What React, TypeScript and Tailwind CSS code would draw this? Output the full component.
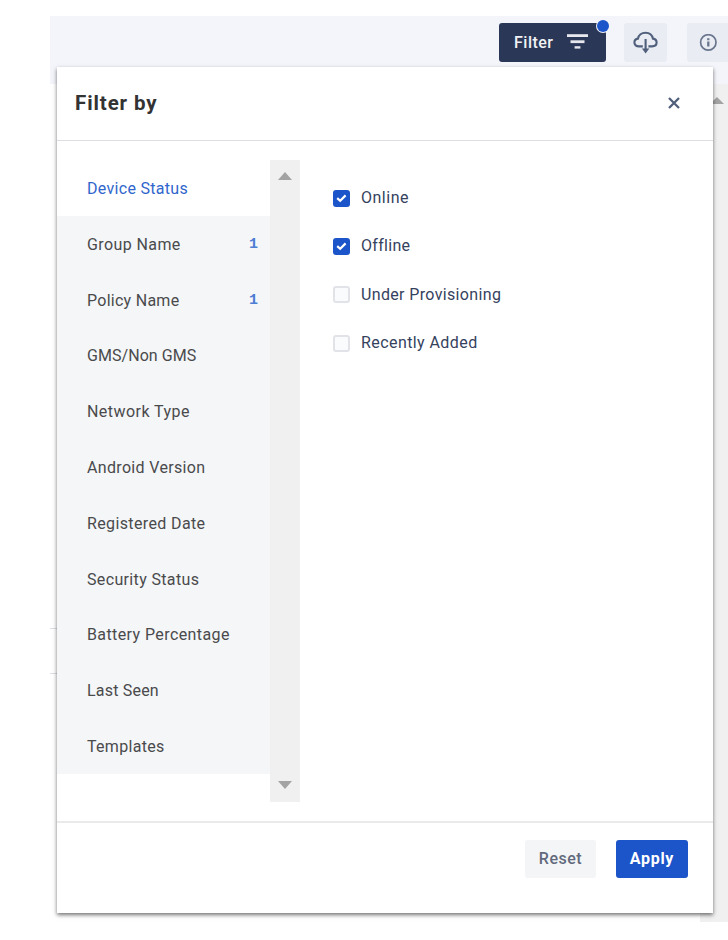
import React from "react";

const categories = [
  { label: "Device Status", track: "tracking-[0.3px]" },
  { label: "Group Name", track: "tracking-[0.4px]", count: 1 },
  { label: "Policy Name", track: "tracking-[0.27px]", count: 1 },
  { label: "GMS/Non GMS", track: "tracking-[0.05px]" },
  { label: "Network Type", track: "tracking-[0.45px]" },
  { label: "Android Version", track: "tracking-[0.33px]" },
  { label: "Registered Date", track: "tracking-[0.37px]" },
  { label: "Security Status", track: "tracking-[0.35px]" },
  { label: "Battery Percentage", track: "tracking-[0.4px]" },
  { label: "Last Seen", track: "tracking-[0.2px]" },
  { label: "Templates", track: "tracking-[0.3px]" },
];

const statuses = [
  { label: "Online", checked: true, track: "tracking-[0.5px]" },
  { label: "Offline", checked: true, track: "tracking-[0.3px]" },
  { label: "Under Provisioning", checked: false, track: "tracking-[0.35px]" },
  { label: "Recently Added", checked: false, track: "tracking-[0.42px]" },
];

function Toolbar() {
  return (
    <header className="ml-[50px] flex h-[68px] items-start justify-end bg-[#f4f5fb] pt-[7px]">
      <button className="relative mr-[18px] flex h-[39px] w-[107px] items-center rounded-[3px] bg-[#2a3756] pl-[15px] text-white">
        <span className="text-[16px] font-medium leading-none tracking-[0.5px] text-[#f1f2f5]">Filter</span>
        <svg className="absolute left-[68px] top-[11px]" width="21" height="16" viewBox="0 0 21 16" fill="#e6e8ed">
          <rect x="0" y="0.2" width="21" height="2.8" />
          <rect x="3.5" y="6.3" width="14" height="2.8" />
          <rect x="7.6" y="12.2" width="5.8" height="2.4" />
        </svg>
        <span className="absolute -right-[3px] -top-[3px] size-[12px] rounded-full bg-[#1c54c9] ring-1 ring-[#f4f5fb]" />
      </button>
      <button className="mr-5 flex h-[39px] w-[43px] items-center justify-center rounded-[3px] bg-[#e9ecf3]">
        <svg width="25" height="24" viewBox="0 0 25 24" fill="none" stroke="#505f7b" strokeWidth="2.1">
          <path d="M9.8 15.4H6C3.2 15.4 1.4 13.8 1.4 11.6C1.4 9.5 2.9 7.9 5 7.6C5.6 4.3 8.7 1.7 12.5 1.7C16.3 1.7 19.2 4.1 19.9 7.6C22.1 7.9 23.6 9.5 23.6 11.6C23.6 13.8 21.8 15.4 19 15.4H15.4" />
          <path d="M12.6 8V18.6" />
          <path d="M8.9 17.6H16.3L12.6 22.4Z" fill="#505f7b" stroke="none" />
        </svg>
      </button>
      <button className="flex h-[39px] w-[41px] items-center rounded-l-[3px] bg-[#e9ecf3] pl-[12px]">
        <svg width="18" height="18" viewBox="0 0 18 18" fill="none" stroke="#68758d">
          <circle cx="9.3" cy="8.4" r="7.7" strokeWidth="1.7" />
          <path d="M9.3 4.2V6.3M9.3 7.6V12.6" strokeWidth="2.3" />
        </svg>
      </button>
    </header>
  );
}

function Checkbox({ checked }: { checked: boolean }) {
  if (!checked) {
    return <span className="size-[17px] rounded-[3px] border-2 border-[#e1e3e9] bg-[#fafbfc]" />;
  }
  return (
    <span className="flex size-[17px] items-center justify-center rounded-[3px] bg-[#1c54c9]">
      <svg width="11" height="9" viewBox="0 0 11 9" fill="none" stroke="white" strokeWidth="2.2">
        <path d="M1.2 4.1L4.2 6.8L9.6 1.4" />
      </svg>
    </span>
  );
}

function FilterPanel() {
  return (
    <section className="absolute left-[57px] top-[67px] flex h-[846px] w-[656px] flex-col bg-white shadow-[0_2px_4px_0_rgba(0,0,0,0.55)]">
      <div className="flex h-[74px] shrink-0 items-center justify-between border-b border-[#dcdee4] pl-[18px] pr-[33px]">
        <h1 className="text-[20.5px] font-bold leading-none tracking-[0.9px] text-[#333333]">Filter by</h1>
        <svg className="mb-[2px]" width="12" height="12" viewBox="0 0 12 12" stroke="#505f7b" strokeWidth="2.3">
          <path d="M1 1L11 11M11 1L1 11" />
        </svg>
      </div>
      <div className="flex h-[680px] shrink-0 pt-[19px]">
        <nav className="w-[213px]">
          {categories.map((item, i) => (
            <div
              key={item.label}
              className={
                i === 0
                  ? "flex h-[56px] items-center bg-white pl-[30px] pt-[2px] text-[#2f66cc]"
                  : "flex h-[55.8px] items-center justify-between bg-[#f4f6f8] pl-[30px] pr-[12px] pt-[2px] text-[#4a4a4c]"
              }
            >
              <span className={"whitespace-nowrap text-[16px] leading-none " + item.track}>{item.label}</span>
              {item.count && <span className="font-['Liberation_Mono',monospace] text-[15px] font-bold leading-none text-[#4d7dd4]">{item.count}</span>}
            </div>
          ))}
        </nav>
        <div className="flex h-[642px] w-[30px] flex-col items-center justify-between bg-[#f0f0f0] pb-[13px] pt-[12px]">
          <svg width="14" height="8" viewBox="0 0 14 8" fill="#a3a3a3"><path d="M0 8L7 0L14 8Z" /></svg>
          <svg width="14" height="8" viewBox="0 0 14 8" fill="#a3a3a3"><path d="M0 0L7 8L14 0Z" /></svg>
        </div>
        <div className="flex flex-col pl-[33px] pt-[14px]">
          {statuses.map((s) => (
            <label key={s.label} className="flex h-[48.3px] items-center gap-[11px] text-[#35425e]">
              <Checkbox checked={s.checked} />
              <span className={"whitespace-nowrap text-[16px] leading-none " + s.track}>{s.label}</span>
            </label>
          ))}
        </div>
      </div>
      <footer className="flex flex-1 items-start justify-end gap-5 border-t-2 border-[#eaeaea] pr-[25px] pt-[17px]">
        <button className="h-[38px] w-[71px] rounded-[3px] bg-[#f4f5f7] text-[16px] font-medium leading-none tracking-[0.5px] text-[#626a7c]">Reset</button>
        <button className="h-[38px] w-[72px] rounded-[3px] bg-[#1c54c9] text-[16px] font-bold leading-none tracking-[0.7px] text-white">Apply</button>
      </footer>
    </section>
  );
}

export default function App() {
  return (
    <div className="relative h-[940px] w-[728px] overflow-hidden bg-white pt-4 font-[Roboto,'Noto_Sans',sans-serif]">
      <Toolbar />
      <div className="flex h-[838px] justify-between pl-[50px]">
        <div className="mt-[544px] h-[46px] w-[20px] border-y border-[#dcdee4]" />
        <div className="flex w-[28px] justify-end bg-[#f0f0f0] pr-[4px] pt-[13px]">
          <svg width="14" height="8" viewBox="0 0 14 8" fill="#a3a3a3"><path d="M0 7L7 0L14 7Z" /></svg>
        </div>
      </div>
      <FilterPanel />
    </div>
  );
}
